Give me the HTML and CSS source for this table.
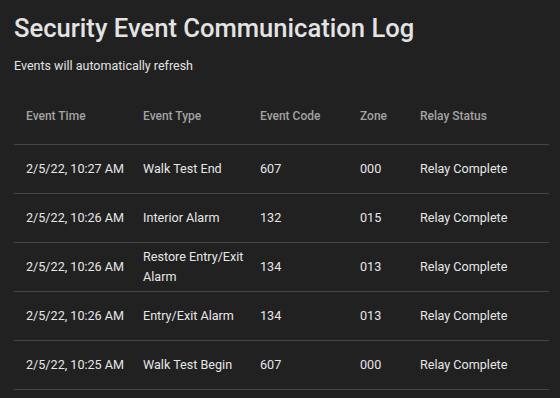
FILE: index.html
```html
<!DOCTYPE html>
<html>
<head>
<meta charset="utf-8">
<link rel="stylesheet" href="styles.css">
</head>
<body>
<div class="page">
  <h1 class="title">Security Event Communication Log</h1>
  <p class="subtitle">Events will automatically refresh</p>
  <table class="log">
    <colgroup>
      <col class="c1"><col class="c2"><col class="c3"><col class="c4"><col class="c5">
    </colgroup>
    <thead>
      <tr><th>Event Time</th><th>Event Type</th><th>Event Code</th><th>Zone</th><th>Relay Status</th></tr>
    </thead>
    <tbody>
      <tr><td>2/5/22, 10:27 AM</td><td>Walk Test End</td><td>607</td><td>000</td><td>Relay Complete</td></tr>
      <tr><td>2/5/22, 10:26 AM</td><td>Interior Alarm</td><td>132</td><td>015</td><td>Relay Complete</td></tr>
      <tr><td>2/5/22, 10:26 AM</td><td>Restore Entry/Exit Alarm</td><td>134</td><td>013</td><td>Relay Complete</td></tr>
      <tr><td>2/5/22, 10:26 AM</td><td>Entry/Exit Alarm</td><td>134</td><td>013</td><td>Relay Complete</td></tr>
      <tr><td>2/5/22, 10:25 AM</td><td>Walk Test Begin</td><td>607</td><td>000</td><td>Relay Complete</td></tr>
    </tbody>
  </table>
</div>
</body>
</html>
```
FILE: styles.css
```css
html, body {
  margin: 0;
  padding: 0;
  background: #212121;
}
body {
  font-family: Roboto, "Liberation Sans", sans-serif;
  color: #e6e6e6;
}
.page {
  padding: 10px 11px 0 14px;
}
.title {
  margin: 0;
  font-size: 25.6px;
  font-weight: 500;
  line-height: 36px;
  color: #e3e3e3;
}
.subtitle {
  margin: 11px 0 0 0;
  font-size: 12.5px;
  line-height: 18px;
  color: #e3e3e3;
}
.log {
  margin-top: 12px;
  width: 535px;
  border-collapse: collapse;
  table-layout: fixed;
}
.c1 { width: 117px; }
.c2 { width: 117px; }
.c3 { width: 100px; }
.c4 { width: 60px; }
.log th {
  height: 57px;
  padding: 0 0 0 12px;
  text-align: left;
  font-size: 12px;
  font-weight: 500;
  color: #a3a3a3;
  border-bottom: 1px solid #464646;
}
.log td {
  height: 48px;
  padding: 0 0 0 12px;
  font-size: 12.6px;
  line-height: 20px;
  color: #e6e6e6;
  border-bottom: 1px solid #464646;
}
```
